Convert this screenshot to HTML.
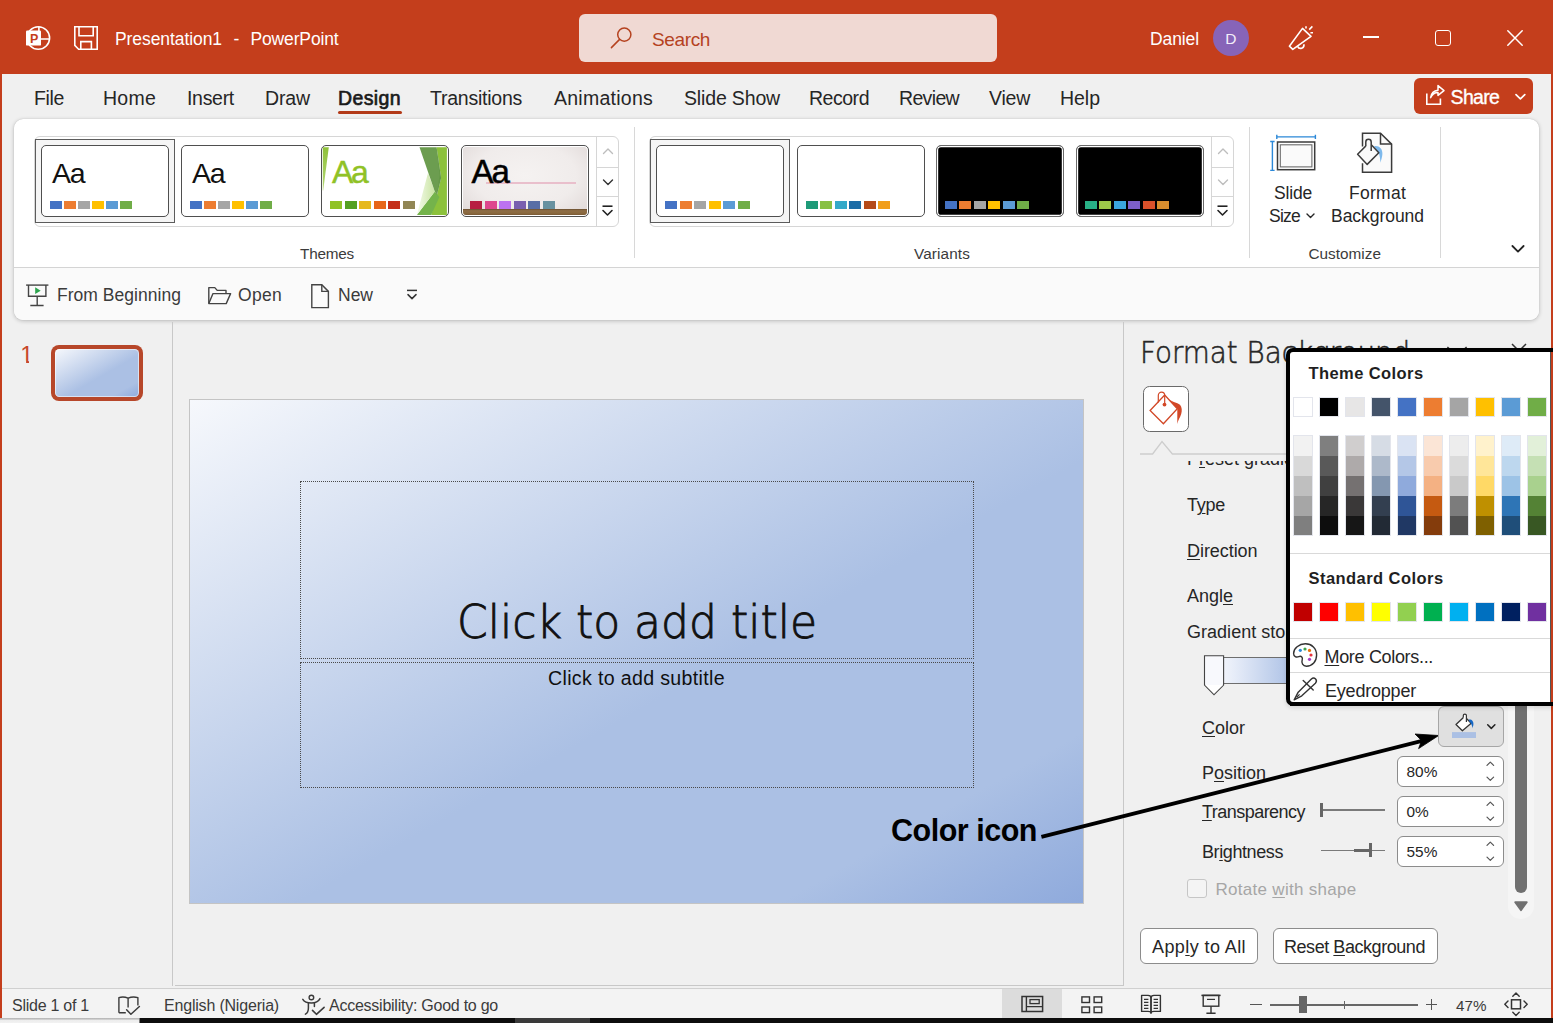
<!DOCTYPE html>
<html lang="en"><head><meta charset="utf-8"><title>Presentation1 - PowerPoint</title>
<style>
html,body{margin:0;padding:0;}
body{width:1553px;height:1023px;position:relative;overflow:hidden;background:#F0F0F0;font-family:"Liberation Sans",sans-serif;}
.b{position:absolute;box-sizing:border-box;}
.t{position:absolute;white-space:nowrap;line-height:1;}
svg{overflow:visible;}
u{text-decoration:underline;text-underline-offset:2px;text-decoration-thickness:1px;}
</style></head><body>
<div class="b" style="left:0px;top:0px;width:1553px;height:74px;background:#C43E1C;"></div>
<div class="b" style="left:0px;top:74px;width:2px;height:944px;background:#C43E1C;"></div>
<div class="b" style="left:1551px;top:74px;width:2px;height:944px;background:#C43E1C;"></div>
<svg class="b" style="left:24px;top:24px;" width="28" height="28" viewBox="0 0 28 28">
<circle cx="14.3" cy="14" r="11.3" fill="none" stroke="#fff" stroke-width="1.6"/>
<path d="M14.9 2.7V15H25.6" fill="none" stroke="#fff" stroke-width="1.6"/>
<rect x="2" y="6.4" width="15" height="15.2" rx="1.2" fill="#fff"/>
</svg>
<span class="t" id="t_0" style="left:29.9px;top:33.00px;font-size:12.5px;color:#C43E1C;font-weight:700;">P</span>
<svg class="b" style="left:72px;top:24px;" width="28" height="28" viewBox="0 0 28 28">
<path d="M2.8 2.8H25.2V25.2H6.6L2.8 21.4Z" fill="none" stroke="#fff" stroke-width="1.6" stroke-linejoin="miter"/>
<path d="M7 2.8V11.8H21.2V2.8" fill="none" stroke="#fff" stroke-width="1.6"/>
<path d="M8.8 25.2V17.6H19.4V25.2" fill="none" stroke="#fff" stroke-width="1.6"/>
</svg>
<span class="t" id="t_1" style="left:115px;top:31.00px;font-size:17.5px;color:#fff;letter-spacing:-0.077px;">Presentation1</span>
<span class="t" id="t_2" style="left:233.5px;top:31.00px;font-size:17.5px;color:#fff;">-</span>
<span class="t" id="t_3" style="left:250.5px;top:31.00px;font-size:17.5px;color:#fff;letter-spacing:-0.149px;">PowerPoint</span>
<div class="b" style="left:579px;top:14px;width:418px;height:48px;background:#F0D9D3;border-radius:6px;"></div>
<svg class="b" style="left:608px;top:24px;" width="28" height="28" viewBox="0 0 28 28">
<circle cx="16.3" cy="10.6" r="6.6" fill="none" stroke="#B5421F" stroke-width="1.5"/>
<path d="M11.6 15.4L3.4 23.6" stroke="#B5421F" stroke-width="1.5" stroke-linecap="round"/>
</svg>
<span class="t" id="t_4" style="left:652px;top:30.00px;font-size:19px;color:#B5421F;letter-spacing:-0.367px;">Search</span>
<span class="t" id="t_5" style="left:1150px;top:31.00px;font-size:17.5px;color:#fff;letter-spacing:-0.104px;">Daniel</span>
<div class="b" style="left:1213px;top:20px;width:36px;height:36px;background:#8764B8;border-radius:50%;"></div>
<span class="t" id="t_6" style="left:1225.3px;top:31.00px;font-size:15.5px;color:#F3EEFA;">D</span>
<svg class="b" style="left:1286px;top:22px;" width="32" height="32" viewBox="0 0 32 32">
<path d="M3.4 24.2L16.5 6.4L25 14.4L6.8 27.4Z" fill="none" stroke="#fff" stroke-width="1.6" stroke-linejoin="round"/>
<path d="M11.6 24.4a3.3 3.3 0 0 0 6.2 -2.2" fill="none" stroke="#fff" stroke-width="1.6"/>
<path d="M20 4.2V6.4M23.2 7.6L26.4 4.4M24.4 10.8H27" stroke="#fff" stroke-width="1.6" stroke-linecap="butt"/>
</svg>
<div class="b" style="left:1363px;top:36.4px;width:16px;height:1.7px;background:#fff;"></div>
<div class="b" style="left:1435.3px;top:30.1px;width:15.4px;height:15.6px;border:1.6px solid #fff;border-radius:3px;"></div>
<svg class="b" style="left:1505px;top:28px;" width="20" height="20" viewBox="0 0 20 20"><path d="M2.8 2.8L17.2 17.2M17.2 2.8L2.8 17.2" stroke="#fff" stroke-width="1.5" stroke-linecap="round"/></svg>
<span class="t" id="t_7" style="left:34px;top:89.00px;font-size:19.5px;color:#262626;letter-spacing:-0.356px;">File</span>
<span class="t" id="t_8" style="left:103px;top:89.00px;font-size:19.5px;color:#262626;letter-spacing:0.246px;">Home</span>
<span class="t" id="t_9" style="left:187px;top:89.00px;font-size:19.5px;color:#262626;letter-spacing:-0.296px;">Insert</span>
<span class="t" id="t_10" style="left:265px;top:89.00px;font-size:19.5px;color:#262626;letter-spacing:-0.126px;">Draw</span>
<span class="t" id="t_11" style="left:430px;top:89.00px;font-size:19.5px;color:#262626;letter-spacing:-0.241px;">Transitions</span>
<span class="t" id="t_12" style="left:554px;top:89.00px;font-size:19.5px;color:#262626;letter-spacing:0.252px;">Animations</span>
<span class="t" id="t_13" style="left:684px;top:89.00px;font-size:19.5px;color:#262626;letter-spacing:-0.156px;">Slide Show</span>
<span class="t" id="t_14" style="left:809px;top:89.00px;font-size:19.5px;color:#262626;letter-spacing:-0.477px;">Record</span>
<span class="t" id="t_15" style="left:899px;top:89.00px;font-size:19.5px;color:#262626;letter-spacing:-0.657px;">Review</span>
<span class="t" id="t_16" style="left:989px;top:89.00px;font-size:19.5px;color:#262626;letter-spacing:-0.231px;">View</span>
<span class="t" id="t_17" style="left:1060px;top:89.00px;font-size:19.5px;color:#262626;letter-spacing:-0.027px;">Help</span>
<span class="t" id="t_18" style="left:338px;top:89.00px;font-size:19.5px;color:#1a1a1a;letter-spacing:0.383px;-webkit-text-stroke:0.65px #1a1a1a;">Design</span>
<div class="b" style="left:338px;top:110.5px;width:64px;height:3px;background:#B33A18;border-radius:1.5px;"></div>
<div class="b" style="left:1414px;top:78px;width:119px;height:36px;background:#C43E1C;border-radius:6px;"></div>
<svg class="b" style="left:1423px;top:82px;" width="26" height="26" viewBox="0 0 26 26">
<path d="M3.8 11.4V22.2H17.4V16.6" fill="none" stroke="#fff" stroke-width="1.6" stroke-linejoin="miter"/>
<path d="M7.6 15.6Q8.6 8.8 15 8.2V3.6L21 8.6L15 13.4V10.4Q10 10.4 7.6 15.6Z" fill="none" stroke="#fff" stroke-width="1.5" stroke-linejoin="round"/>
</svg>
<span class="t" id="t_19" style="left:1450.6px;top:88.00px;font-size:19.5px;color:#fff;letter-spacing:-0.710px;-webkit-text-stroke:0.35px #fff;">Share</span>
<svg class="b" style="left:1514px;top:92px;" width="12" height="10" viewBox="0 0 12 10"><path d="M2 2.6L6.4 6.8L10.8 2.6" fill="none" stroke="#fff" stroke-width="1.7" stroke-linecap="round" stroke-linejoin="round"/></svg>
<div class="b" style="left:14px;top:119px;width:1525px;height:201px;background:#fff;border-radius:9px;box-shadow:0 1px 4px rgba(0,0,0,.22),0 0 1px rgba(0,0,0,.2);overflow:hidden;"></div>
<div class="b" style="left:14px;top:267px;width:1525px;height:53px;background:#FAFAFA;border-radius:0 0 9px 9px;border-top:1px solid #D4D4D4;"></div>
<div class="b" style="left:33.5px;top:136px;width:585.5px;height:91px;border:1px solid #D6D6D6;border-radius:6px;"></div>
<div class="b" style="left:596px;top:137px;width:1px;height:90px;background:#D6D6D6;"></div>
<div class="b" style="left:596px;top:167px;width:23px;height:1px;background:#D6D6D6;"></div>
<div class="b" style="left:596px;top:196px;width:23px;height:1px;background:#D6D6D6;"></div>
<div class="b" style="left:35px;top:139px;width:140px;height:84px;background:#F5F5F5;border:1px solid #5c5c5c;"></div>
<div class="b" style="left:41px;top:145px;width:128px;height:72px;border:1px solid #4f4f4f;border-radius:5px;background:#fff;overflow:hidden;"></div>
<span class="t" id="t_20" style="left:52px;top:159.00px;font-size:28.5px;color:#111;letter-spacing:-1.180px;">Aa</span>
<div class="b" style="left:50px;top:201px;width:12px;height:8px;background:#4472C4;"></div><div class="b" style="left:64px;top:201px;width:12px;height:8px;background:#ED7D31;"></div><div class="b" style="left:78px;top:201px;width:12px;height:8px;background:#A5A5A5;"></div><div class="b" style="left:92px;top:201px;width:12px;height:8px;background:#FFC000;"></div><div class="b" style="left:106px;top:201px;width:12px;height:8px;background:#5B9BD5;"></div><div class="b" style="left:120px;top:201px;width:12px;height:8px;background:#70AD47;"></div>
<div class="b" style="left:181px;top:145px;width:128px;height:72px;border:1px solid #4f4f4f;border-radius:5px;background:#fff;overflow:hidden;"></div>
<span class="t" id="t_21" style="left:192px;top:159.00px;font-size:28.5px;color:#111;letter-spacing:-1.180px;">Aa</span>
<div class="b" style="left:190px;top:201px;width:12px;height:8px;background:#4472C4;"></div><div class="b" style="left:204px;top:201px;width:12px;height:8px;background:#ED7D31;"></div><div class="b" style="left:218px;top:201px;width:12px;height:8px;background:#A5A5A5;"></div><div class="b" style="left:232px;top:201px;width:12px;height:8px;background:#FFC000;"></div><div class="b" style="left:246px;top:201px;width:12px;height:8px;background:#5B9BD5;"></div><div class="b" style="left:260px;top:201px;width:12px;height:8px;background:#70AD47;"></div>
<div class="b" style="left:321px;top:145px;width:128px;height:72px;border:1px solid #4f4f4f;border-radius:5px;background:#fff;overflow:hidden;"><svg class="b" style="left:-1px;top:-1px" width="128" height="72" viewBox="0 0 128 72"><defs><linearGradient id="fg1" x1="0" y1="0" x2="0" y2="1"><stop offset="0" stop-color="#8FC13A"/><stop offset="1" stop-color="#B5D878"/></linearGradient><linearGradient id="fg2" x1="0" y1="0" x2="1" y2="0"><stop offset="0" stop-color="#F4FAEA"/><stop offset="1" stop-color="#C9E4A2"/></linearGradient></defs><polygon points="1.8,2.3 7.8,2.3 2.2,45.5 1.8,45.5" fill="url(#fg1)"/><polygon points="115.6,2.3 125.9,2.3 125.9,70 110.2,70 116,50 120.1,33" fill="#8CC13B"/><polygon points="113.8,46.4 118.4,52 110.2,70 95.8,70" fill="#74B34B"/><polygon points="107,28 113.8,46.4 95.8,70 99,58" fill="url(#fg2)"/><polygon points="98.5,2.3 115.6,2.3 120.1,33 116,50 113.8,46.4" fill="#6C9D50"/><polygon points="115.6,2.3 120.1,33 116,50 118.5,30" fill="#5F9640" opacity=".55"/></svg></div>
<span class="t" id="t_22" style="left:332px;top:156.00px;font-size:32px;color:#90C226;letter-spacing:-2.328px;-webkit-text-stroke:0.45px #90C226;">Aa</span>
<div class="b" style="left:330.0px;top:201px;width:12px;height:8px;background:#90C226;"></div><div class="b" style="left:344.5px;top:201px;width:12px;height:8px;background:#54A021;"></div><div class="b" style="left:359.0px;top:201px;width:12px;height:8px;background:#E6B91E;"></div><div class="b" style="left:373.5px;top:201px;width:12px;height:8px;background:#E76618;"></div><div class="b" style="left:388.0px;top:201px;width:12px;height:8px;background:#C42F1A;"></div><div class="b" style="left:402.5px;top:201px;width:12px;height:8px;background:#918655;"></div>
<div class="b" style="left:461px;top:145px;width:128px;height:72px;border:1px solid #4f4f4f;border-radius:5px;background:#fff;overflow:hidden;background:#fff;"><div class="b" style="left:0.8px;top:1.2px;width:124.4px;height:68px;border-radius:3px;background:radial-gradient(ellipse 75% 85% at 50% 42%,#F5F2F1 0%,#F0ECEB 55%,#DDD5D4 100%);"></div><div class="b" style="left:0.8px;top:63px;width:124.4px;height:6.2px;border-radius:0 0 3px 3px;background:linear-gradient(#6A4E2F 0,#8E6E46 28%,#8A693F 70%,#7A5A36 100%);"></div><div class="b" style="left:24.4px;top:36px;width:90px;height:1.5px;background:#E9BFCC;"></div></div>
<span class="t" id="t_23" style="left:471.6px;top:155.00px;font-size:33px;color:#000;letter-spacing:-2.186px;-webkit-text-stroke:0.5px #000;">Aa</span>
<div class="b" style="left:470.0px;top:201px;width:12px;height:8px;background:#B71E42;"></div><div class="b" style="left:484.5px;top:201px;width:12px;height:8px;background:#DE478E;"></div><div class="b" style="left:499.0px;top:201px;width:12px;height:8px;background:#BC72F0;"></div><div class="b" style="left:513.5px;top:201px;width:12px;height:8px;background:#795FAF;"></div><div class="b" style="left:528.0px;top:201px;width:12px;height:8px;background:#586EA6;"></div><div class="b" style="left:542.5px;top:201px;width:12px;height:8px;background:#6892A0;"></div>
<svg class="b" style="left:601.5px;top:147px;" width="12" height="9" viewBox="0 0 12 9"><path d="M1.5 6.5L6 2L10.5 6.5" fill="none" stroke="#BDBDBD" stroke-width="1.4" stroke-linecap="round" stroke-linejoin="round"/></svg>
<svg class="b" style="left:601.5px;top:178px;" width="12" height="9" viewBox="0 0 12 9"><path d="M1.5 2L6 6.5L10.5 2" fill="none" stroke="#333" stroke-width="1.4" stroke-linecap="round" stroke-linejoin="round"/></svg>
<svg class="b" style="left:601px;top:204px;" width="14" height="14" viewBox="0 0 14 14"><path d="M1.5 2.2H11.5" stroke="#222" stroke-width="1.6"/><path d="M2 6.5L6.5 11L11 6.5" fill="none" stroke="#222" stroke-width="1.6" stroke-linecap="round" stroke-linejoin="round"/></svg>
<span class="t" id="t_24" style="left:300px;top:246.00px;font-size:15.3px;color:#3b3b3b;letter-spacing:-0.210px;">Themes</span>
<div class="b" style="left:634px;top:127px;width:1px;height:131px;background:#D8D8D8;"></div>
<div class="b" style="left:648.5px;top:136px;width:585.5px;height:91px;border:1px solid #D6D6D6;border-radius:6px;"></div>
<div class="b" style="left:1211px;top:137px;width:1px;height:90px;background:#D6D6D6;"></div>
<div class="b" style="left:1211px;top:167px;width:23px;height:1px;background:#D6D6D6;"></div>
<div class="b" style="left:1211px;top:196px;width:23px;height:1px;background:#D6D6D6;"></div>
<div class="b" style="left:650px;top:139px;width:140px;height:84px;background:#F5F5F5;border:1px solid #5c5c5c;"></div>
<div class="b" style="left:656px;top:145px;width:128px;height:72px;border:1px solid #4f4f4f;border-radius:5px;background:#fff;overflow:hidden;"></div>
<div class="b" style="left:665.0px;top:201px;width:12px;height:8px;background:#4472C4;"></div><div class="b" style="left:679.5px;top:201px;width:12px;height:8px;background:#ED7D31;"></div><div class="b" style="left:694.0px;top:201px;width:12px;height:8px;background:#A5A5A5;"></div><div class="b" style="left:708.5px;top:201px;width:12px;height:8px;background:#FFC000;"></div><div class="b" style="left:723.0px;top:201px;width:12px;height:8px;background:#5B9BD5;"></div><div class="b" style="left:737.5px;top:201px;width:12px;height:8px;background:#70AD47;"></div>
<div class="b" style="left:796.5px;top:145px;width:128px;height:72px;border:1px solid #4f4f4f;border-radius:5px;background:#fff;overflow:hidden;"></div>
<div class="b" style="left:805.5px;top:201px;width:12px;height:8px;background:#1E9A78;"></div><div class="b" style="left:820.0px;top:201px;width:12px;height:8px;background:#88C044;"></div><div class="b" style="left:834.5px;top:201px;width:12px;height:8px;background:#34A9C9;"></div><div class="b" style="left:849.0px;top:201px;width:12px;height:8px;background:#1C6CA6;"></div><div class="b" style="left:863.5px;top:201px;width:12px;height:8px;background:#B54A18;"></div><div class="b" style="left:878.0px;top:201px;width:12px;height:8px;background:#F19E1A;"></div>
<div class="b" style="left:936px;top:145px;width:128px;height:72px;border:1px solid #6a6a6a;border-radius:5px;background:#000;box-shadow:inset 0 0 0 1.2px #fff;"></div>
<div class="b" style="left:945.0px;top:201px;width:12px;height:8px;background:#4472C4;"></div><div class="b" style="left:959.4px;top:201px;width:12px;height:8px;background:#ED7D31;"></div><div class="b" style="left:973.8px;top:201px;width:12px;height:8px;background:#A5A5A5;"></div><div class="b" style="left:988.2px;top:201px;width:12px;height:8px;background:#FFC000;"></div><div class="b" style="left:1002.6px;top:201px;width:12px;height:8px;background:#5B9BD5;"></div><div class="b" style="left:1017.0px;top:201px;width:12px;height:8px;background:#70AD47;"></div>
<div class="b" style="left:1076px;top:145px;width:128px;height:72px;border:1px solid #6a6a6a;border-radius:5px;background:#000;box-shadow:inset 0 0 0 1.2px #fff;"></div>
<div class="b" style="left:1085.0px;top:201px;width:12px;height:8px;background:#28B085;"></div><div class="b" style="left:1099.4px;top:201px;width:12px;height:8px;background:#9DC84A;"></div><div class="b" style="left:1113.8px;top:201px;width:12px;height:8px;background:#3AA5DC;"></div><div class="b" style="left:1128.2px;top:201px;width:12px;height:8px;background:#7D5FC8;"></div><div class="b" style="left:1142.6px;top:201px;width:12px;height:8px;background:#D9512A;"></div><div class="b" style="left:1157.0px;top:201px;width:12px;height:8px;background:#D88E2E;"></div>
<svg class="b" style="left:1216.5px;top:147px;" width="12" height="9" viewBox="0 0 12 9"><path d="M1.5 6.5L6 2L10.5 6.5" fill="none" stroke="#BDBDBD" stroke-width="1.4" stroke-linecap="round" stroke-linejoin="round"/></svg>
<svg class="b" style="left:1216.5px;top:178px;" width="12" height="9" viewBox="0 0 12 9"><path d="M1.5 2L6 6.5L10.5 2" fill="none" stroke="#BDBDBD" stroke-width="1.4" stroke-linecap="round" stroke-linejoin="round"/></svg>
<svg class="b" style="left:1216px;top:204px;" width="14" height="14" viewBox="0 0 14 14"><path d="M1.5 2.2H11.5" stroke="#222" stroke-width="1.6"/><path d="M2 6.5L6.5 11L11 6.5" fill="none" stroke="#222" stroke-width="1.6" stroke-linecap="round" stroke-linejoin="round"/></svg>
<span class="t" id="t_25" style="left:914px;top:246.00px;font-size:15.3px;color:#3b3b3b;letter-spacing:0.126px;">Variants</span>
<div class="b" style="left:1249px;top:127px;width:1px;height:131px;background:#D8D8D8;"></div>
<svg class="b" style="left:1268px;top:133px;" width="52" height="42" viewBox="0 0 52 42">
<path d="M8.8 3.9H47.4M8.8 1.8V6M47.4 1.8V6" stroke="#2B88D8" stroke-width="1.4" fill="none"/>
<path d="M4.4 8.5V37.4M2.2 8.5H6.6M2.2 37.4H6.6" stroke="#2B88D8" stroke-width="1.4" fill="none"/>
<rect x="9.5" y="9" width="37.2" height="27.7" fill="#fff" stroke="#3b3b3b" stroke-width="1.5"/>
<rect x="12.3" y="11.8" width="31.6" height="22.1" fill="#FAFAFA" stroke="#6b6b6b" stroke-width="1.1"/>
</svg>
<span class="t" id="t_26" style="left:1274px;top:185.00px;font-size:17.5px;color:#262626;letter-spacing:-0.184px;">Slide</span>
<span class="t" id="t_27" style="left:1269px;top:208.00px;font-size:17.5px;color:#262626;letter-spacing:-0.764px;">Size</span>
<svg class="b" style="left:1304.6px;top:211.6px;" width="12" height="9" viewBox="0 0 12 9"><path d="M2 2L5.5 5.5L9 2" fill="none" stroke="#262626" stroke-width="1.4" stroke-linecap="round" stroke-linejoin="round"/></svg>
<svg class="b" style="left:1354px;top:128px;" width="44" height="50" viewBox="0 0 44 50">
<path d="M8.5 18.4V5.3H26.5L37.6 16.1V44.3H8.5V35.2" fill="#FAFAFA" stroke="#3b3b3b" stroke-width="1.5" stroke-linejoin="miter"/>
<path d="M26.5 5.3V16.1H37.6" fill="none" stroke="#3b3b3b" stroke-width="1.5"/>
<path d="M20.1 18.2C25 17.4 28.6 20.6 28.4 26C28.2 29.6 27 32 26.5 34.8C26.2 31 25.8 28 25 25.4Z" fill="#7DB9EC"/>
<path d="M3.6 26.2L15.2 14.6L24.8 24.8L13.2 36.4Z" fill="#FAFAFA" stroke="#3b3b3b" stroke-width="1.5" stroke-linejoin="round"/>
<path d="M11.8 18.2V14A2.7 2.7 0 0 1 17.2 14V23" fill="#FAFAFA" stroke="#3b3b3b" stroke-width="1.5"/>
</svg>
<span class="t" id="t_28" style="left:1349px;top:185.00px;font-size:17.5px;color:#262626;letter-spacing:0.263px;">Format</span>
<span class="t" id="t_29" style="left:1331px;top:208.00px;font-size:17.5px;color:#262626;letter-spacing:-0.040px;">Background</span>
<span class="t" id="t_30" style="left:1308.5px;top:246.00px;font-size:15.3px;color:#3b3b3b;letter-spacing:0.026px;">Customize</span>
<div class="b" style="left:1440px;top:127px;width:1px;height:131px;background:#D8D8D8;"></div>
<svg class="b" style="left:1510px;top:242.5px;" width="16" height="12" viewBox="0 0 16 12"><path d="M2.4 3L8 8.6L13.6 3" fill="none" stroke="#222" stroke-width="1.8" stroke-linecap="round" stroke-linejoin="round"/></svg>
<svg class="b" style="left:24px;top:282px;" width="26" height="26" viewBox="0 0 26 26">
<path d="M2.1 3.1H24.4" stroke="#444" stroke-width="1.4"/>
<path d="M4.5 3.1V14.3H21.9V3.1" fill="none" stroke="#444" stroke-width="1.4"/>
<path d="M13.2 14.3V23.5M6.3 23.5H19.6" stroke="#444" stroke-width="1.4" fill="none"/>
<path d="M11.2 5.3L16.7 8.7L11.2 12Z" fill="#2DA44E"/>
</svg>
<span class="t" id="t_31" style="left:57px;top:287.00px;font-size:17.5px;color:#3b3b3b;letter-spacing:0.033px;">From Beginning</span>
<svg class="b" style="left:205px;top:283px;" width="28" height="24" viewBox="0 0 28 24">
<path d="M3.8 20.4V4.6H9.8L12.2 7.4H21V10.6" fill="none" stroke="#444" stroke-width="1.4" stroke-linejoin="round"/>
<path d="M3.8 20.6L8 10.6H25.6L21.2 20.6Z" fill="none" stroke="#444" stroke-width="1.4" stroke-linejoin="round"/>
</svg>
<span class="t" id="t_32" style="left:238px;top:287.00px;font-size:17.5px;color:#3b3b3b;letter-spacing:0.297px;">Open</span>
<svg class="b" style="left:309px;top:282px;" width="22" height="28" viewBox="0 0 22 28">
<path d="M2.8 2.8H12.8L19.4 9.4V25.6H2.8Z" fill="none" stroke="#444" stroke-width="1.4" stroke-linejoin="miter"/>
<path d="M12.8 2.8V9.4H19.4" fill="none" stroke="#444" stroke-width="1.4"/>
</svg>
<span class="t" id="t_33" style="left:338px;top:287.00px;font-size:17.5px;color:#3b3b3b;letter-spacing:-0.008px;">New</span>
<svg class="b" style="left:404.5px;top:288px;" width="14" height="14" viewBox="0 0 14 14"><path d="M2 2.4H12" stroke="#333" stroke-width="1.5"/><path d="M3 6.6L7 10.6L11 6.6" fill="none" stroke="#333" stroke-width="1.5" stroke-linecap="round" stroke-linejoin="round"/></svg>
<div class="b" style="left:172px;top:322px;width:1px;height:664px;background:#C8C8C8;"></div>
<div class="b" style="left:174.5px;top:985px;width:948.5px;height:1px;background:#C8C8C8;"></div>
<div class="b" style="left:1123px;top:322px;width:1px;height:664px;background:#C8C8C8;"></div>
<span class="t" id="t_34" style="left:20.3px;top:344.00px;font-size:23.5px;color:#C8472A;clip-path:polygon(0 0,100% 0,100% 16.8px,8.7px 16.8px,8.7px 100%,5.8px 100%,5.8px 16.8px,0 16.8px);">1</span>
<div class="b" style="left:51px;top:345px;width:92px;height:56px;background:#B7472A;border-radius:8px;"></div>
<div class="b" style="left:55px;top:349px;width:84px;height:48px;background:linear-gradient(to bottom right,#F6F8FC 0%,#ABC0E4 56%,#ABC0E4 83%,#8FAADC 100%);border-radius:4.5px;box-shadow:inset 0 0 0 1px rgba(255,255,255,.55);"></div>
<div class="b" style="left:189px;top:399px;width:895px;height:504.5px;background:linear-gradient(to bottom right,#F6F8FC 0%,#ABC0E4 56%,#ABC0E4 83%,#8FAADC 100%);border:1px solid #C4C4C4;"></div>
<div class="b" style="left:300px;top:481px;width:674px;height:178px;border:1px dotted #4a4a4a;"></div>
<div class="b" style="left:300px;top:662px;width:674px;height:126px;border:1px dotted #4a4a4a;"></div>
<span class="t" id="t_35" style="left:456.5px;top:598.88px;font-size:46px;color:#111;font-weight:200;font-family:'DejaVu Sans','Liberation Sans',sans-serif;transform-origin:0 0;transform:scaleX(0.957);-webkit-text-stroke:0.9px #111;">Click to add title</span>
<span class="t" id="t_36" style="left:548px;top:669.00px;font-size:19.6px;color:#0f0f0f;letter-spacing:0.338px;">Click to add subtitle</span>
<span class="t" id="t_37" style="left:891px;top:815.00px;font-size:30.5px;color:#000;font-weight:700;letter-spacing:-0.481px;">Color icon</span>
<svg class="b" style="left:1030px;top:700px;" width="430" height="150" viewBox="0 0 430 150">
<path d="M11.4 136.9L392 40.9" stroke="#000" stroke-width="3.7" stroke-linecap="butt" fill="none"/>
<path d="M408.7 35.5L385 34L391.6 40.6L388.6 48.6Z" fill="#000" stroke="#000" stroke-width="0.8" stroke-linejoin="miter"/>
</svg>
<span class="t" id="t_38" style="left:1139.8px;top:339.04px;font-size:29.5px;color:#262626;font-weight:200;font-family:'DejaVu Sans','Liberation Sans',sans-serif;transform-origin:0 0;transform:scaleX(0.940);-webkit-text-stroke:0.55px #262626;">Format Background</span>
<svg class="b" style="left:1449px;top:345.5px;" width="16" height="12" viewBox="0 0 16 12"><path d="M-1.6 1L8 10L17.6 1" fill="none" stroke="#333" stroke-width="1.5"/></svg>
<svg class="b" style="left:1511px;top:342.9px;" width="16" height="16" viewBox="0 0 16 16"><path d="M1 1L15 15M15 1L1 15" fill="none" stroke="#333" stroke-width="1.5"/></svg>
<div class="b" style="left:1143px;top:386px;width:46px;height:46px;background:#fff;border:1.2px solid #6a6a6a;border-radius:6.5px;"></div>
<svg class="b" style="left:1147px;top:389px;" width="38" height="40" viewBox="0 0 38 40">
<path d="M3.1 21.5L17.7 6L30.3 19.7L16.4 34.7Z" fill="#fff" stroke="#D24726" stroke-width="1.3" stroke-linejoin="miter"/>
<path d="M11.3 13.4V6.4A3.2 3.2 0 0 1 17.7 6.4V14.4" fill="none" stroke="#D24726" stroke-width="1.2"/>
<circle cx="17.5" cy="15.6" r="1.9" fill="#D24726"/>
<path d="M22.4 10.4C26 13.4 31 13.6 33 15.8C35 18 35.2 22 34.2 25C33.2 28.4 31 31 30.3 35L30.3 19.7Z" fill="#D24726"/>
</svg>
<svg class="b" style="left:1140px;top:440px;" width="320" height="16" viewBox="0 0 320 16"><path d="M0 14H12.6L22 1.6L32.4 14H320" fill="none" stroke="#CDCDCD" stroke-width="1.3"/></svg>
<div class="b" style="left:1124px;top:460.5px;width:390px;height:60px;overflow:hidden;"><span class="t" id="t_preset" style="left:63px;top:-10.00px;font-size:18px;color:#262626;margin-top:-0.5px;">P<u>r</u>eset gradients</span></div>
<span class="t" id="t_40" style="left:1187px;top:496.00px;font-size:18px;color:#262626;letter-spacing:-0.262px;">T<u>y</u>pe</span>
<span class="t" id="t_41" style="left:1187px;top:542.00px;font-size:18px;color:#262626;letter-spacing:-0.060px;"><u>D</u>irection</span>
<span class="t" id="t_42" style="left:1187px;top:587.00px;font-size:18px;color:#262626;letter-spacing:-0.012px;">Angl<u>e</u></span>
<span class="t" id="t_43" style="left:1187px;top:623.00px;font-size:18px;color:#262626;letter-spacing:0.024px;">Gradient stops</span>
<div class="b" style="left:1222px;top:657.4px;width:220px;height:26.6px;border:1px solid #6e6e6e;background:linear-gradient(to right,#F1F4FB 0,#E6ECF8 12px,#B7C9E9 58px,#ABC0E4 90px);"></div>
<svg class="b" style="left:1203px;top:654px;" width="22" height="44" viewBox="0 0 22 44"><path d="M1.5 1.7H20.6V31L11 40.6L1.5 31Z" fill="#F8F9FD" stroke="#444" stroke-width="1.1" stroke-linejoin="miter"/><path d="M2.2 31H20L11 39.8Z" fill="#fff"/></svg>
<span class="t" id="t_44" style="left:1202px;top:719.00px;font-size:18px;color:#262626;letter-spacing:-0.005px;"><u>C</u>olor</span>
<div class="b" style="left:1438px;top:706.4px;width:65.6px;height:40.5px;background:#E0E0E0;border:1px solid #A6A6A6;border-radius:6px;"></div>
<svg class="b" style="left:1449px;top:710px;" width="30" height="30" viewBox="0 0 30 30">
<path d="M7 14.5L15.5 6.5L22.2 13.2L13.4 20.7Z" fill="#fff" stroke="#333" stroke-width="1.3" stroke-linejoin="round"/>
<path d="M14.3 7.6V5.6A1.55 1.55 0 0 1 17.4 5.6V12" fill="#fff" stroke="#333" stroke-width="1.2"/>
<path d="M19.6 9.6C22.6 9 24.8 11.2 24.4 14.6C24.2 16.2 23.6 17.4 23.6 18.4C23.2 15.4 22.4 13.4 20.4 11.4Z" fill="#1667C4"/>
<rect x="3" y="22.1" width="24" height="5.9" fill="#ABC0E4"/>
</svg>
<svg class="b" style="left:1485px;top:722px;" width="12" height="9" viewBox="0 0 12 9"><path d="M2.7 2.8L6.3 6.4L9.9 2.8" fill="none" stroke="#222" stroke-width="1.5" stroke-linecap="round" stroke-linejoin="round"/></svg>
<span class="t" id="t_45" style="left:1202px;top:764.00px;font-size:18px;color:#262626;letter-spacing:-0.008px;">P<u>o</u>sition</span>
<div class="b" style="left:1397px;top:756.2px;width:106.6px;height:31px;background:#fff;border:1px solid #8c8c8c;border-radius:6px;"></div><span class="t" id="t_46" style="left:1406.5px;top:764.00px;font-size:15.4px;color:#262626;letter-spacing:0.065px;">80%</span><svg class="b" style="left:1485px;top:759.9px;" width="10" height="8" viewBox="0 0 10 8"><path d="M2 5.4L5.3 2.1L8.6 5.4" fill="none" stroke="#555" stroke-width="1.2" stroke-linecap="round" stroke-linejoin="round"/></svg><svg class="b" style="left:1485px;top:774.8px;" width="10" height="8" viewBox="0 0 10 8"><path d="M2 2.1L5.3 5.4L8.6 2.1" fill="none" stroke="#555" stroke-width="1.2" stroke-linecap="round" stroke-linejoin="round"/></svg>
<span class="t" id="t_47" style="left:1202px;top:803.00px;font-size:18px;color:#262626;letter-spacing:-0.533px;"><u>T</u>ransparency</span>
<div class="b" style="left:1397px;top:796.2px;width:106.6px;height:31px;background:#fff;border:1px solid #8c8c8c;border-radius:6px;"></div><span class="t" id="t_48" style="left:1406.5px;top:804.00px;font-size:15.4px;color:#262626;letter-spacing:-0.122px;">0%</span><svg class="b" style="left:1485px;top:799.9px;" width="10" height="8" viewBox="0 0 10 8"><path d="M2 5.4L5.3 2.1L8.6 5.4" fill="none" stroke="#555" stroke-width="1.2" stroke-linecap="round" stroke-linejoin="round"/></svg><svg class="b" style="left:1485px;top:814.8px;" width="10" height="8" viewBox="0 0 10 8"><path d="M2 2.1L5.3 5.4L8.6 2.1" fill="none" stroke="#555" stroke-width="1.2" stroke-linecap="round" stroke-linejoin="round"/></svg>
<span class="t" id="t_49" style="left:1202px;top:843.00px;font-size:18px;color:#262626;letter-spacing:-0.406px;">Br<u>i</u>ghtness</span>
<div class="b" style="left:1397px;top:836.2px;width:106.6px;height:31px;background:#fff;border:1px solid #8c8c8c;border-radius:6px;"></div><span class="t" id="t_50" style="left:1406.5px;top:844.00px;font-size:15.4px;color:#262626;letter-spacing:0.062px;">55%</span><svg class="b" style="left:1485px;top:839.9px;" width="10" height="8" viewBox="0 0 10 8"><path d="M2 5.4L5.3 2.1L8.6 5.4" fill="none" stroke="#555" stroke-width="1.2" stroke-linecap="round" stroke-linejoin="round"/></svg><svg class="b" style="left:1485px;top:854.8px;" width="10" height="8" viewBox="0 0 10 8"><path d="M2 2.1L5.3 5.4L8.6 2.1" fill="none" stroke="#555" stroke-width="1.2" stroke-linecap="round" stroke-linejoin="round"/></svg>
<div class="b" style="left:1320px;top:809.3px;width:65px;height:1.7px;background:#7a7a7a;"></div>
<div class="b" style="left:1319.8px;top:803px;width:3.6px;height:14px;background:#666;"></div>
<div class="b" style="left:1321px;top:849.5px;width:64px;height:1.7px;background:#7a7a7a;"></div>
<div class="b" style="left:1353.5px;top:848.6px;width:18px;height:3.6px;background:#666;"></div>
<div class="b" style="left:1368.8px;top:843px;width:3.6px;height:14px;background:#666;"></div>
<div class="b" style="left:1187px;top:879px;width:19.5px;height:18.5px;background:#F4F4F4;border:1px solid #C6C6C6;border-radius:3px;"></div>
<span class="t" id="t_51" style="left:1215.5px;top:881.00px;font-size:17px;color:#A6A6A6;letter-spacing:0.288px;">Rotate <u>w</u>ith shape</span>
<div class="b" style="left:1508px;top:690px;width:26px;height:229px;background:#F5F5F5;border-radius:0 0 13px 13px;"></div>
<div class="b" style="left:1514.8px;top:690px;width:12.4px;height:203px;background:#707070;border-radius:0 0 6.2px 6.2px;"></div>
<svg class="b" style="left:1513px;top:900px;" width="16" height="12" viewBox="0 0 16 12"><path d="M2.2 2.2H13.8L8 10.2Z" fill="#707070" stroke="#707070" stroke-width="1.8" stroke-linejoin="round"/></svg>
<div class="b" style="left:1140px;top:928px;width:118px;height:36px;background:#fff;border:1px solid #8c8c8c;border-radius:6px;"></div>
<span class="t" id="t_52" style="left:1152px;top:938.00px;font-size:18px;color:#262626;letter-spacing:0.410px;">App<u>l</u>y to All</span>
<div class="b" style="left:1272.5px;top:928px;width:165.5px;height:36px;background:#fff;border:1px solid #8c8c8c;border-radius:6px;"></div>
<span class="t" id="t_53" style="left:1284px;top:938.00px;font-size:18px;color:#262626;letter-spacing:-0.444px;">Reset <u>B</u>ackground</span>
<div class="b" style="left:1285.5px;top:348px;width:275px;height:358.2px;background:#fff;border:4.5px solid #000;border-radius:7px;box-shadow:0 2px 4px rgba(0,0,0,.13);"></div>
<span class="t" id="t_54" style="left:1308.5px;top:365.00px;font-size:16.5px;color:#1f1f1f;font-weight:700;letter-spacing:0.414px;">Theme Colors</span>
<div class="b" style="left:1293px;top:397.3px;width:19.6px;height:19.4px;background:#FFFFFF;border:1px solid #E3E5EC;"></div>
<div class="b" style="left:1293px;top:434.9px;width:19.6px;height:100.9px;background:linear-gradient(#F2F2F2 0px 20px,#D9D9D9 20px 40px,#BFBFBF 40px 60px,#A6A6A6 60px 80px,#7F7F7F 80px 100px);border:1px solid #E3E5EC;"></div>
<div class="b" style="left:1293px;top:602.3px;width:19.6px;height:19.4px;background:#C00000;border:1px solid #E3E5EC;"></div>
<div class="b" style="left:1319px;top:397.3px;width:19.6px;height:19.4px;background:#000000;border:1px solid #E3E5EC;"></div>
<div class="b" style="left:1319px;top:434.9px;width:19.6px;height:100.9px;background:linear-gradient(#7F7F7F 0px 20px,#595959 20px 40px,#404040 40px 60px,#262626 60px 80px,#0D0D0D 80px 100px);border:1px solid #E3E5EC;"></div>
<div class="b" style="left:1319px;top:602.3px;width:19.6px;height:19.4px;background:#FF0000;border:1px solid #E3E5EC;"></div>
<div class="b" style="left:1345px;top:397.3px;width:19.6px;height:19.4px;background:#E7E6E6;border:1px solid #E3E5EC;"></div>
<div class="b" style="left:1345px;top:434.9px;width:19.6px;height:100.9px;background:linear-gradient(#D0CECE 0px 20px,#AEAAAA 20px 40px,#757171 40px 60px,#3A3838 60px 80px,#161616 80px 100px);border:1px solid #E3E5EC;"></div>
<div class="b" style="left:1345px;top:602.3px;width:19.6px;height:19.4px;background:#FFC000;border:1px solid #E3E5EC;"></div>
<div class="b" style="left:1371px;top:397.3px;width:19.6px;height:19.4px;background:#44546A;border:1px solid #E3E5EC;"></div>
<div class="b" style="left:1371px;top:434.9px;width:19.6px;height:100.9px;background:linear-gradient(#D6DCE5 0px 20px,#ADB9CA 20px 40px,#8497B0 40px 60px,#333F50 60px 80px,#222A35 80px 100px);border:1px solid #E3E5EC;"></div>
<div class="b" style="left:1371px;top:602.3px;width:19.6px;height:19.4px;background:#FFFF00;border:1px solid #E3E5EC;"></div>
<div class="b" style="left:1397px;top:397.3px;width:19.6px;height:19.4px;background:#4472C4;border:1px solid #E3E5EC;"></div>
<div class="b" style="left:1397px;top:434.9px;width:19.6px;height:100.9px;background:linear-gradient(#DAE3F3 0px 20px,#B4C7E7 20px 40px,#8FAADC 40px 60px,#2F5597 60px 80px,#203864 80px 100px);border:1px solid #E3E5EC;"></div>
<div class="b" style="left:1397px;top:602.3px;width:19.6px;height:19.4px;background:#92D050;border:1px solid #E3E5EC;"></div>
<div class="b" style="left:1423px;top:397.3px;width:19.6px;height:19.4px;background:#ED7D31;border:1px solid #E3E5EC;"></div>
<div class="b" style="left:1423px;top:434.9px;width:19.6px;height:100.9px;background:linear-gradient(#FBE5D6 0px 20px,#F8CBAD 20px 40px,#F4B183 40px 60px,#C55A11 60px 80px,#843C0C 80px 100px);border:1px solid #E3E5EC;"></div>
<div class="b" style="left:1423px;top:602.3px;width:19.6px;height:19.4px;background:#00B050;border:1px solid #E3E5EC;"></div>
<div class="b" style="left:1449px;top:397.3px;width:19.6px;height:19.4px;background:#A5A5A5;border:1px solid #E3E5EC;"></div>
<div class="b" style="left:1449px;top:434.9px;width:19.6px;height:100.9px;background:linear-gradient(#EDEDED 0px 20px,#DBDBDB 20px 40px,#C9C9C9 40px 60px,#7C7C7C 60px 80px,#525252 80px 100px);border:1px solid #E3E5EC;"></div>
<div class="b" style="left:1449px;top:602.3px;width:19.6px;height:19.4px;background:#00B0F0;border:1px solid #E3E5EC;"></div>
<div class="b" style="left:1475px;top:397.3px;width:19.6px;height:19.4px;background:#FFC000;border:1px solid #E3E5EC;"></div>
<div class="b" style="left:1475px;top:434.9px;width:19.6px;height:100.9px;background:linear-gradient(#FFF2CC 0px 20px,#FFE699 20px 40px,#FFD966 40px 60px,#BF9000 60px 80px,#7F6000 80px 100px);border:1px solid #E3E5EC;"></div>
<div class="b" style="left:1475px;top:602.3px;width:19.6px;height:19.4px;background:#0070C0;border:1px solid #E3E5EC;"></div>
<div class="b" style="left:1501px;top:397.3px;width:19.6px;height:19.4px;background:#5B9BD5;border:1px solid #E3E5EC;"></div>
<div class="b" style="left:1501px;top:434.9px;width:19.6px;height:100.9px;background:linear-gradient(#DEEBF7 0px 20px,#BDD7EE 20px 40px,#9DC3E6 40px 60px,#2E75B6 60px 80px,#1F4E79 80px 100px);border:1px solid #E3E5EC;"></div>
<div class="b" style="left:1501px;top:602.3px;width:19.6px;height:19.4px;background:#002060;border:1px solid #E3E5EC;"></div>
<div class="b" style="left:1527px;top:397.3px;width:19.6px;height:19.4px;background:#70AD47;border:1px solid #E3E5EC;"></div>
<div class="b" style="left:1527px;top:434.9px;width:19.6px;height:100.9px;background:linear-gradient(#E2F0D9 0px 20px,#C5E0B4 20px 40px,#A9D18E 40px 60px,#548235 60px 80px,#385723 80px 100px);border:1px solid #E3E5EC;"></div>
<div class="b" style="left:1527px;top:602.3px;width:19.6px;height:19.4px;background:#7030A0;border:1px solid #E3E5EC;"></div>
<div class="b" style="left:1290px;top:553px;width:262px;height:1px;background:#D9D9D9;"></div>
<span class="t" id="t_55" style="left:1308.5px;top:570.00px;font-size:16.5px;color:#1f1f1f;font-weight:700;letter-spacing:0.443px;">Standard Colors</span>
<div class="b" style="left:1290px;top:638px;width:262px;height:1px;background:#D9D9D9;"></div>
<div class="b" style="left:1290px;top:672px;width:262px;height:1px;background:#D9D9D9;"></div>
<svg class="b" style="left:1292px;top:642px;" width="26" height="26" viewBox="0 0 26 26">
<path d="M13.4 1.8C7 1.8 1.6 6.4 1.6 11.4C1.6 14.6 4.4 15.6 6.8 14.6C9.4 13.6 11 15.4 10.2 17.8C9.2 21 10.8 24.2 14.4 24.2C20.4 24.2 24.6 19.4 24.6 13C24.6 6.4 19.8 1.8 13.4 1.8Z" fill="#fff" stroke="#333" stroke-width="1.4"/>
<circle cx="8.3" cy="8.3" r="1.6" fill="#2B88D8"/><circle cx="13" cy="7" r="1.6" fill="#3FA34D"/>
<circle cx="17.5" cy="8.4" r="1.6" fill="#E8710A"/><circle cx="19" cy="13" r="1.6" fill="#E8333C"/><circle cx="17.5" cy="17.3" r="1.6" fill="#A93BC2"/>
</svg>
<span class="t" id="t_56" style="left:1324.5px;top:648.00px;font-size:18px;color:#262626;letter-spacing:-0.324px;"><u>M</u>ore Colors...</span>
<svg class="b" style="left:1292px;top:676px;" width="26" height="26" viewBox="0 0 26 26">
<path d="M6.2 16.2L19.4 3Q21.6 1 23.6 3Q25.4 5 23.4 7.2L9.8 19.8L2.2 23.8Z" fill="#fff" stroke="#333" stroke-width="1.4" stroke-linejoin="round"/>
<path d="M11.2 4.4L21.2 14" stroke="#333" stroke-width="1.4" stroke-linecap="round"/>
<path d="M4.6 21.2L7.6 18.4" stroke="#333" stroke-width="1.2"/>
</svg>
<span class="t" id="t_57" style="left:1325px;top:682.00px;font-size:18px;color:#262626;letter-spacing:-0.206px;">Eyedropper</span>
<div class="b" style="left:1290px;top:702.4px;width:262px;height:3.8px;background:#000;"></div>
<div class="b" style="left:1550px;top:352px;width:1px;height:350px;background:#555;"></div>
<div class="b" style="left:1551px;top:352.4px;width:2px;height:349.6px;background:#C43E1C;"></div>
<div class="b" style="left:2px;top:988px;width:1549px;height:30px;background:#F3F3F3;border-top:1px solid #D0D0D0;"></div>
<span class="t" id="t_58" style="left:12px;top:998.00px;font-size:16px;color:#3b3b3b;letter-spacing:-0.255px;">Slide 1 of 1</span>
<svg class="b" style="left:116px;top:992px;" width="26" height="24" viewBox="0 0 26 24">
<path d="M2.9 20.7V5.6Q7.5 4 12.1 6.2Q16.7 4 21.9 5.6V13.4" fill="none" stroke="#3b3b3b" stroke-width="1.4" stroke-linejoin="round"/>
<path d="M12.1 6.2V15.6M2.9 20.7H9.8" fill="none" stroke="#3b3b3b" stroke-width="1.4"/>
<path d="M10.6 17.8L14.9 22.2L23.4 14.5" fill="none" stroke="#3b3b3b" stroke-width="1.5" stroke-linecap="round" stroke-linejoin="round"/>
</svg>
<span class="t" id="t_59" style="left:164px;top:998.00px;font-size:16px;color:#3b3b3b;letter-spacing:-0.193px;">English (Nigeria)</span>
<svg class="b" style="left:300px;top:991px;" width="28" height="26" viewBox="0 0 28 26">
<circle cx="11.4" cy="6.5" r="2.3" fill="none" stroke="#3b3b3b" stroke-width="1.4"/>
<path d="M2.8 8.4C4.4 11.2 8 12 11.4 12C14.8 12 18.4 10.6 20 7.6" fill="none" stroke="#3b3b3b" stroke-width="1.5" stroke-linecap="round"/>
<path d="M8.4 12V17C8.4 20 7.6 22 5.4 23.2M14.4 11.8V15.6" fill="none" stroke="#3b3b3b" stroke-width="1.5" stroke-linecap="round"/>
<path d="M12.5 19.4L16.4 23.3L24.1 16.3" fill="none" stroke="#3b3b3b" stroke-width="1.6" stroke-linecap="round" stroke-linejoin="round"/>
</svg>
<span class="t" id="t_60" style="left:329px;top:998.00px;font-size:16px;color:#3b3b3b;letter-spacing:-0.248px;">Accessibility: Good to go</span>
<div class="b" style="left:1002px;top:989px;width:60px;height:29px;background:#DCDCDC;"></div>
<svg class="b" style="left:1019px;top:993px;" width="26" height="22" viewBox="0 0 26 22">
<path d="M3 3.4H23.6V18.6H3Z" fill="none" stroke="#333" stroke-width="1.5"/>
<path d="M7.4 3.4V18.6M7.4 13.6H23.6" fill="none" stroke="#333" stroke-width="1.4"/>
<rect x="11" y="6.6" width="9.2" height="4" fill="none" stroke="#333" stroke-width="1.3"/>
</svg>
<svg class="b" style="left:1079px;top:993px;" width="26" height="22" viewBox="0 0 26 22">
<rect x="2.9" y="3.9" width="7.6" height="5.6" fill="none" stroke="#333" stroke-width="1.4"/>
<rect x="15.1" y="3.9" width="7.6" height="5.6" fill="none" stroke="#333" stroke-width="1.4"/>
<rect x="2.9" y="14" width="7.6" height="5.6" fill="none" stroke="#333" stroke-width="1.4"/>
<rect x="15.1" y="14" width="7.6" height="5.6" fill="none" stroke="#333" stroke-width="1.4"/>
</svg>
<svg class="b" style="left:1139px;top:992px;" width="24" height="24" viewBox="0 0 24 24">
<path d="M2.6 3.4H9Q12 3.4 12 6V21Q12 19.4 9 19.4H2.6Z" fill="none" stroke="#333" stroke-width="1.4" stroke-linejoin="round"/>
<path d="M21.4 3.4H15Q12 3.4 12 6V21Q12 19.4 15 19.4H21.4Z" fill="none" stroke="#333" stroke-width="1.4" stroke-linejoin="round"/>
<path d="M5 7.4H9.4M5 10.4H9.4M5 13.4H9.4M5 16.4H9.4M14.6 7.4H19M14.6 10.4H19M14.6 13.4H19M14.6 16.4H19" stroke="#333" stroke-width="1.1"/>
</svg>
<svg class="b" style="left:1199px;top:992px;" width="24" height="24" viewBox="0 0 24 24">
<path d="M2.4 3.4H21.6" stroke="#333" stroke-width="1.5"/>
<rect x="4.2" y="3.4" width="15.6" height="10.8" fill="none" stroke="#333" stroke-width="1.4"/>
<path d="M12 14.2V21M7.4 21.2H16.6" stroke="#333" stroke-width="1.4"/>
<path d="M8 7.4H16" stroke="#333" stroke-width="1.2"/>
</svg>
<div class="b" style="left:1250px;top:1004.2px;width:11.5px;height:1.2px;background:#555;"></div>
<div class="b" style="left:1270px;top:1004px;width:148px;height:1.5px;background:#666;"></div>
<div class="b" style="left:1298.7px;top:996px;width:8.6px;height:16.6px;background:#666;"></div>
<div class="b" style="left:1343.6px;top:1001px;width:1.4px;height:7.8px;background:#666;"></div>
<div class="b" style="left:1426.2px;top:1004.2px;width:11px;height:1.2px;background:#555;"></div>
<div class="b" style="left:1431.1px;top:999.3px;width:1.2px;height:10.8px;background:#555;"></div>
<span class="t" id="t_61" style="left:1456px;top:998.00px;font-size:15.2px;color:#3b3b3b;letter-spacing:0.031px;">47%</span>
<svg class="b" style="left:1503px;top:991px;" width="28" height="28" viewBox="0 0 28 28">
<rect x="8.5" y="8.8" width="9" height="9" fill="none" stroke="#333" stroke-width="1.5"/>
<path d="M9.8 5.3L13 2.1L16.2 5.3M9.8 21.3L13 24.5L16.2 21.3M5 10.1L1.8 13.3L5 16.5M21 10.1L24.2 13.3L21 16.5" fill="none" stroke="#333" stroke-width="1.4" stroke-linecap="round" stroke-linejoin="round"/>
</svg>
<div class="b" style="left:0px;top:1018px;width:1553px;height:5px;background:#0d0d0d;"></div>
<div class="b" style="left:0px;top:1018px;width:138.5px;height:5px;background:linear-gradient(#B4B4B4 0,#C4C4C4 1.2px,#EDEDED 2.2px,#F2F2F2 5px);"></div>
<div class="b" style="left:138.5px;top:1018px;width:1px;height:5px;background:#777;"></div>
<div class="b" style="left:515px;top:1018px;width:75px;height:5px;background:#3a3a3a;"></div>
</body></html>
